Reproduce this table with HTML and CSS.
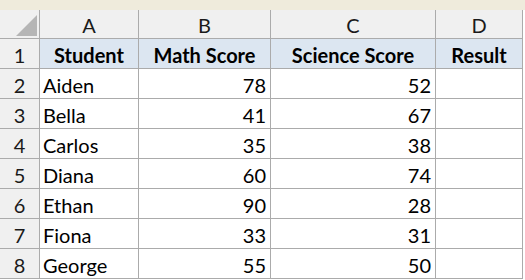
FILE: index.html
```html
<!DOCTYPE html>
<html>
<head>
<meta charset="utf-8">
<link rel="stylesheet" href="styles.css">
</head>
<body>
<div class="strip"></div>
<div class="sheet">
  <div class="cell corner"><svg width="21" height="21" viewBox="0 0 21 21"><polygon points="0,21 21,21 21,0" fill="#b5b5b5"/></svg></div>
  <div class="cell colh">A</div>
  <div class="cell colh">B</div>
  <div class="cell colh">C</div>
  <div class="cell colh">D</div>

  <div class="cell rowh">1</div>
  <div class="cell head">Student</div>
  <div class="cell head">Math Score</div>
  <div class="cell head">Science Score</div>
  <div class="cell head">Result</div>

  <div class="cell rowh">2</div><div class="cell txt">Aiden</div><div class="cell num">78</div><div class="cell num">52</div><div class="cell"></div>
  <div class="cell rowh">3</div><div class="cell txt">Bella</div><div class="cell num">41</div><div class="cell num">67</div><div class="cell"></div>
  <div class="cell rowh">4</div><div class="cell txt">Carlos</div><div class="cell num">35</div><div class="cell num">38</div><div class="cell"></div>
  <div class="cell rowh">5</div><div class="cell txt">Diana</div><div class="cell num">60</div><div class="cell num">74</div><div class="cell"></div>
  <div class="cell rowh">6</div><div class="cell txt">Ethan</div><div class="cell num">90</div><div class="cell num">28</div><div class="cell"></div>
  <div class="cell rowh">7</div><div class="cell txt">Fiona</div><div class="cell num">33</div><div class="cell num">31</div><div class="cell"></div>
  <div class="cell rowh">8</div><div class="cell txt">George</div><div class="cell num">55</div><div class="cell num">50</div><div class="cell"></div>
</div>
</body>
</html>
```
FILE: styles.css
```css
html, body {
  margin: 0;
  padding: 0;
  background: #ffffff;
}
body {
  font-family: Lato, "Open Sans", sans-serif;
  font-size: 20px;
  color: #000;
}
.strip {
  height: 10px;
  background: #efebdc;
}
.sheet {
  display: grid;
  grid-template-columns: 39px 98px 131px 164px 86px;
  grid-template-rows: 28px repeat(8, 29px);
  gap: 1px;
  background: #ababab;
  width: max-content;
  padding: 0 1px 1px 0;
}
.cell {
  background: #fff;
  display: flex;
  align-items: center;
  line-height: 1;
  white-space: nowrap;
  overflow: hidden;
}
.corner {
  background: #f0f0f0;
  justify-content: flex-end;
  align-items: flex-end;
  padding: 0 2px 2px 0;
}
.colh {
  background: #f0f0f0;
  justify-content: center;
  color: #1a1a1a;
  padding-top: 2px;
}
.rowh {
  background: #f0f0f0;
  justify-content: center;
  color: #1a1a1a;
  padding-top: 2px;
}
.head {
  background: #dce6f1;
  justify-content: center;
  font-weight: bold;
  padding-top: 2px;
}
.txt {
  padding-left: 3px;
  padding-top: 2px;
}
.num {
  justify-content: flex-end;
  padding-right: 4px;
  padding-top: 2px;
}
```
